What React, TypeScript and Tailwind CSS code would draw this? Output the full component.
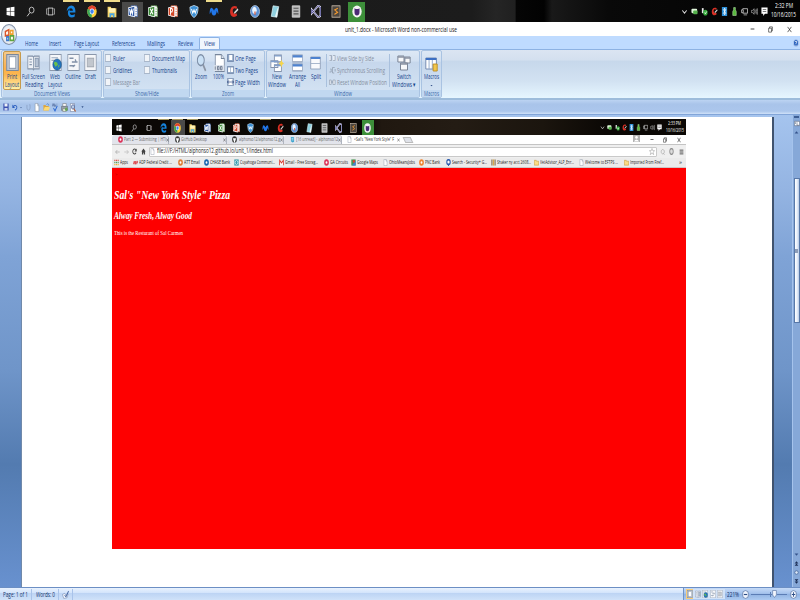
import React, { useLayoutEffect, useRef } from "react";

const SANS = "font-['Open_Sans','Liberation_Sans',sans-serif]";
const SERIF = "font-['Liberation_Serif',serif]";

/* One line of text condensed or stretched to the width of its box. */
function Fit({ children, className = "" }: { children: string; className?: string }) {
  const box = useRef<HTMLSpanElement>(null);
  const inner = useRef<HTMLSpanElement>(null);
  useLayoutEffect(() => {
    const apply = () => {
      if (box.current && inner.current && inner.current.offsetWidth) {
        inner.current.style.transform = "none";
        const w = inner.current.getBoundingClientRect().width;
        inner.current.style.transform = `scaleX(${box.current.clientWidth / w})`;
      }
    };
    apply();
    document.fonts?.ready.then(apply);
  }, []);
  return (
    <span ref={box} className={`block shrink-0 whitespace-nowrap ${className}`}>
      <span ref={inner} className="inline-block origin-left">{children}</span>
    </span>
  );
}

const doc = (
  <>
    <path d="M3 1h7l3 4v10H3z" fill="#fff" stroke="#7b8798" />
    <path d="M10 1v4h3" fill="none" stroke="#7b8798" />
  </>
);

const office = (color: string, dark: string, mark: React.ReactNode) => (
  <>
    <path d="M5 1h9l1.500 3v10H5z" fill="#f7f7f7" stroke={color} />
    <path d="M12 5h2M12 8h2M12 11h2" stroke={color} />
    <path d="M0 3l11-2v14L0 13z" fill="#f4f6fb" />
    <path d="M1 4l9-1.700v11.400L1 12z" fill={dark} />
    <g stroke="#fff" strokeWidth="1.600" fill="none">{mark}</g>
  </>
);

const ring = (c: string) => (
  <>
    <circle cx="8" cy="8" r="7.5" fill={c} />
    <circle cx="8" cy="8" r="2.8" fill="#fff" />
  </>
);

const pageIcon = (inside: React.ReactNode) => (
  <>
    <path d="M1 .5h14v15H1z" fill="#f6f7f9" stroke="#8a97ab" />
    {inside}
  </>
);

const ICONS: Record<string, React.ReactNode> = {
  windows: <path d="M1 3l6-1v5.600H1zM8 1.900L15 1v6.600H8zM1 8.500h6V14l-6-1zM8 8.500h7V15l-7-1z" fill="#fff" />,
  search: <><circle cx="10" cy="6" r="4.300" fill="none" stroke="#ddd" strokeWidth="1.300" /><path d="M7 9.500L2 15" stroke="#ddd" strokeWidth="1.400" /></>,
  taskview: <><rect x="4" y="3" width="8" height="10" fill="none" stroke="#ddd" strokeWidth="1.200" /><path d="M3 4H1v8h2M13 4h2v8h-2" fill="none" stroke="#ddd" /></>,
  edge: <path d="M1 8C1.500 3 4.500.5 8.500.5c4.500 0 6.500 3.500 6.500 6.500v2.200H6c.2 3.500 5 4 8 2v3c-4 2.500-11 1.600-11-4.400C3 7.500 4.500 6 6.500 5 5.800 5.700 5.700 6.300 5.600 7H11c0-4-5.500-4.400-10 1z" fill="#1683dc" />,
  chrome: <><circle cx="8" cy="8" r="7.500" fill="#fcd03c" /><path d="M8 8L1.400 4.500A7.500 7.500 0 0114.600 4.500z" fill="#e0432f" /><path d="M8 8L1.400 4.500A7.500 7.500 0 007.500 15.500z" fill="#3aa757" /><circle cx="8" cy="8" r="3.600" fill="#fff" /><circle cx="8" cy="8" r="2.700" fill="#3f83ee" /></>,
  folder: <><path d="M1 2h5l1 2h8v11H1z" fill="#f6d56b" /><path d="M3 4h10v5H3z" fill="#fff3b8" /><path d="M4 15v-5h8v5h-2.500v-2.500h-3V15z" fill="#4ba6e0" /></>,
  word: office("#2f57a2", "#2b56a3", <path d="M2.500 5l1.500 6 1.500-5L7 11l1.500-6.500" />),
  excel: office("#4b8b3b", "#3b8a35", <path d="M3.500 4.500l4.500 7M8 4.500l-4.500 7" />),
  ppt: office("#d9532c", "#d24625", <path d="M4 12V4.500h2.500q2 2 0 4H4" />),
  shield: <><path d="M8 .5l6.500 2C14.500 9 13 13 8 15.500 3 13 1.500 9 1.500 2.500z" fill="#3b8fd4" stroke="#d7ecfb" /><path d="M4 5l2 5 2-4 2 4 2-5" stroke="#fff" strokeWidth="1.500" fill="none" /></>,
  malware: <path d="M1 11C1 3 4 1 8 7c4-6 7-4 7 4-1-1-2-2-2.500-4C12 10 11 13 8 13S4 10 3.500 7C3 9 2 10 1 11z" fill="#2277ea" />,
  ccleaner: <><path d="M13 2C5-1 1 5 2 10s7 6 11 3l-1-3c-3 2-6 0-6-3s3-4 6-2z" fill="#d93025" /><path d="M8 9l6-5 1 2-6 5z" fill="#d5d5d5" /></>,
  globe: <><circle cx="8" cy="8" r="7.300" fill="#5d92d4" stroke="#c4d4e8" /><path d="M8 2a5 5 0 010 9 4 4 0 010-9z" fill="#e9f3ff" /><path d="M7 8h2v4H7z" fill="#d65a42" /></>,
  notepad: <><path d="M5 1l9 1-3 13-9-1z" fill="#8fd0df" stroke="#def4f8" /><path d="M12 4l1 0-2 11-3-1z" fill="#eaf7f8" /></>,
  calc: <><path d="M2 1h12v14H2z" fill="#b9b9b9" stroke="#e4e4e4" /><path d="M4 4h8M4 7.500h8M4 11h8" stroke="#555" strokeWidth="1.500" /></>,
  vs: <><path d="M11.500 1L15 2.500v11L11.500 15 1 5.500v5L11.500 1z" fill="none" stroke="#eceaf8" strokeWidth="2.600" /><path d="M11.500 1L15 2.500v11L11.500 15 1 5.500v5L11.500 1z" fill="none" stroke="#3b3a86" strokeWidth="1.100" /></>,
  sublime: <><rect x="1.500" y="1" width="13" height="14" fill="#4e4740" stroke="#d6c7b4" /><path d="M11 4L6 6l4.500 3L5.500 11.500" stroke="#f29a30" strokeWidth="1.500" fill="none" /></>,
  github: <><ellipse cx="8" cy="8" rx="7.500" ry="7.500" fill="#f4f4f4" /><path d="M4 4l2 1h4l2-1v5c0 3-2 4-4 4s-4-1-4-4z" fill="#4b2a75" /></>,
  chevron: <path d="M3 6l5 5 5-5" fill="none" stroke="#ddd" strokeWidth="1.800" />,
  chat: <><rect x="1" y="3" width="13" height="8" rx="2" fill="#dff5d9" /><rect x="5" y="6" width="10" height="7" rx="2" fill="#54b04b" /></>,
  usb: <><path d="M2 2h4v9H2z" fill="#e8e8e8" /><circle cx="10" cy="10" r="5" fill="#36ad3c" /><path d="M8 10l2 2 3-4" stroke="#fff" strokeWidth="1.500" fill="none" /></>,
  blue: <><rect x="2" y="0" width="12" height="16" fill="#2d8fd8" /><path d="M5 4l6 7-3 3V2l3 3-6 7" stroke="#fff" fill="none" strokeWidth="1.400" /></>,
  bottle: <path d="M6 1h4v4l2 3v7H4V8l2-3z" fill="#57b83c" stroke="#c5edb9" />,
  network: <><path d="M4 3h11v8H4z" fill="none" stroke="#ddd" strokeWidth="1.500" /><path d="M1 5h4v5H1zM6 14h8" stroke="#ddd" fill="#111" strokeWidth="1.300" /></>,
  volume: <><path d="M1 6h3l3-3v10l-3-3H1z" fill="none" stroke="#ddd" /><path d="M9 5q2 3 0 6M11.500 3.500q3 4.500 0 9M14 2q3 6 0 12" fill="none" stroke="#ddd" /></>,
  notify: <><path d="M1 1h14v11H9l-4 4v-4H1z" fill="#fff" /><path d="M4 4.500h8M4 8h8" stroke="#222" strokeWidth="1.200" /></>,
  print: pageIcon(<><rect x="1" y=".5" width="14" height="15" fill="#c3cad4" stroke="#7b8798" /><rect x="4" y="2.500" width="8" height="11" fill="#fff" stroke="#8c99ac" /></>),
  reading: <><path d="M1 2h6l1 1 1-1h6v12H9l-1 1-1-1H1z" fill="#eef1f6" stroke="#8291a8" /><path d="M8 3v12M10 4h4v8h-4zM3 5h3M3 7.500h3M3 10h3" fill="#b5c2d4" stroke="#8595ab" /></>,
  web: pageIcon(<><path d="M3 3.500h8M3 6h5" stroke="#9aa9bd" /><circle cx="10" cy="10" r="5.300" fill="#2676bd" stroke="#174b81" strokeWidth=".6" /><path d="M7 7l3 1 1 2-3 2-2-3zM11 11l2-1-1 3z" fill="#6bc04b" /></>),
  outline: pageIcon(<path d="M3 4h5M6 7.500h7M3 11h5M7 12l3-1.500M10 5l1 2" stroke="#8291a8" strokeWidth="1.500" />),
  draft: pageIcon(<rect x="4" y="4" width="8" height="8" fill="#c2c7ce" stroke="#a2a8b1" />),
  zoom: <><path d="M10 9l4 6" stroke="#8b94a3" strokeWidth="2.400" /><ellipse cx="7" cy="5.500" rx="5" ry="4.800" fill="#c9e0f5" stroke="#7d8ea6" strokeWidth="1.400" /></>,
  hundred: <><path d="M3 .5h8L15 4v11.500H3z" fill="#fff" stroke="#77869c" /><path d="M11 .5V4h4" fill="#dfe5ee" stroke="#77869c" /><path d="M1 10h14v5H1z" fill="#dde3ec" /><path d="M3 11v3M6 11h2v3H6zM10 11h2v3h-2z" stroke="#59677d" fill="none" strokeWidth=".8" /></>,
  onepage: <><path d="M1 1h14v14H1z" fill="#90a6c4" stroke="#415b87" /><path d="M5 2h7v10H5z" fill="#fff" /></>,
  twopages: <><path d="M1 1h14v14H1z" fill="#8fa5c3" stroke="#4c638b" /><path d="M2.500 3h5v9h-5zM9 3h5v9H9z" fill="#fff" /></>,
  pagewidth: <><path d="M1 1h14v14H1z" fill="#b6c4d7" stroke="#526a92" /><path d="M4 2h8v12H4z" fill="#fff" /><path d="M1 8h14M4 5L1 8l3 3M12 5l3 3-3 3" stroke="#24427d" fill="none" strokeWidth="1.400" /></>,
  newwin: <><path d="M5 1h8v6H5zM1 6h8v6H1zM5 9.500h8v6H5z" fill="#fff" stroke="#8492ab" /><path d="M5 1.700h8M1 6.700h8M5 10.200h8" stroke="#7f9fcd" strokeWidth="1.200" /><path d="M13 5l1 2 2 1.500-2 1L13 12l-1-2.500-2-1 2-1.500z" fill="#f7d64a" /></>,
  arrange: <><path d="M1 1h14v6H1zM1 9h14v6H1z" fill="#fff" stroke="#8b9bb5" /><path d="M1 2h14M1 10h14" stroke="#4d82cf" strokeWidth="2" /></>,
  split: <><path d="M1 2h14v12H1z" fill="#f9fafc" stroke="#8b9bb5" /><path d="M1 3h14" stroke="#4d82cf" strokeWidth="2" /><path d="M1 8.500h14" stroke="#9aabc4" /></>,
  side: <path d="M1 3h5v10H1M9 3h5v10H9M5 3v10" fill="#e9eef5" stroke="#8c98aa" strokeWidth="1.300" />,
  sync: <path d="M1 12h4V6M8 3h5M8 3v11h4M14 6v5M4 5v2" fill="none" stroke="#8c98aa" strokeWidth="1.500" />,
  reset: <path d="M1 4h4v9H1zM9 4h5v9H9zM5 8h4M7 6v4" fill="#e9eef5" stroke="#8c98aa" strokeWidth="1.300" />,
  switch: <><path d="M1 1h7v6H1zM9 2h6v6H9zM4 8h8v7H4z" fill="#f7f8fa" stroke="#737e90" /><path d="M1 2h7M9 3h6M4 9h8" stroke="#8a93a3" strokeWidth="1.600" /></>,
  macros: <><path d="M1 2h13v11H1z" fill="#fff" stroke="#6c83ab" /><path d="M1 3h13" stroke="#3c6fc3" strokeWidth="2" /><path d="M5 4v9M9 4v9" stroke="#8ca4ca" /><path d="M10 8h5v7h-5z" fill="#f1c64c" stroke="#b98b23" /></>,
  save: <><path d="M1 1h14v14H1z" fill="#3a4fae" /><path d="M4 1h8v6H4z" fill="#eef2fb" /><path d="M4 10h8v5H4z" fill="#c9d2ee" /></>,
  undo: <><path d="M3 6c5-5 11-2 10 3-.500 3-3 4-5 5" fill="none" stroke="#2c5fc0" strokeWidth="2.300" /><path d="M1 1v8h7z" fill="#2c5fc0" /></>,
  redo: <path d="M3 2v7q0 5 5 5t5-5V3M10 2h4" fill="none" stroke="#8ba2c6" strokeWidth="2.200" />,
  doc,
  open: <><path d="M1 4h5l1 2h6v9H1z" fill="#dda73e" /><path d="M4 8h12l-3 7H1z" fill="#fbd976" /><path d="M8 3c3-3 5-1 5 2" stroke="#4c7fc5" fill="none" strokeWidth="1.500" /></>,
  spell: <><path d="M1 6l2-5 2 5M7 1v5h2V3M12 2h2M12 5h2" stroke="#415b91" fill="none" strokeWidth="1.200" /><path d="M4 9l4 5 6-9" stroke="#2866d2" fill="none" strokeWidth="2.200" /></>,
  printer: <><path d="M4 1h8v5H4z" fill="#fff" stroke="#666" /><path d="M1 6h14v7H1z" fill="#9aa1a9" stroke="#5b616b" /><path d="M4 10h8v5H4z" fill="#e8f2dc" stroke="#666" /><circle cx="12" cy="11" r="3" fill="#67a457" /></>,
  preview: <><path d="M1 1h11v14H1z" fill="#fff" stroke="#5c6687" /><circle cx="8" cy="7" r="4" fill="#bfd5ef" stroke="#40538c" strokeWidth="1.500" /><path d="M10 10l5 5" stroke="#b65b2e" strokeWidth="2.500" /></>,
  proof: <><path d="M1 8l5-2 2 2 6-1-3 7-7 1z" fill="#f5f8fd" stroke="#6479a3" /><path d="M6 9l3 3 6-10" stroke="#3d5f9d" strokeWidth="1.800" fill="none" /></>,
  opera: ring("#dc3358"),
  octocat: <><circle cx="8" cy="8" r="7.500" fill="#333" /><path d="M4 4l2 1h4l2-1v6H4zM6 10h4v5H6z" fill="#fff" /></>,
  mail: <><path d="M3 2l10 1v10l-5 2-5-3z" fill="#3fa5ce" /><path d="M5 6h6M5 9h6" stroke="#fff" strokeWidth="1.500" /></>,
  apps: <><path d="M1 3h14" stroke="#dd4b39" strokeWidth="3" strokeDasharray="3.500 2" /><path d="M1 8h14" stroke="#4b9c58" strokeWidth="3" strokeDasharray="3.500 2" /><path d="M1 13h14" stroke="#edb32e" strokeWidth="3" strokeDasharray="3.500 2" /></>,
  adp: <path d="M1 12l3-7 2 7M7.500 5v7q3-3 0-7M12 12V5h2.500v3.500H12" stroke="#d8343b" strokeWidth="2" fill="none" />,
  att: ring("#de7d35"),
  chase: ring("#1765ae"),
  tri: <><rect x="1" y="1" width="14" height="14" fill="#3998ab" /><circle cx="8" cy="8" r="4.500" fill="none" stroke="#dff6fa" strokeWidth="2" /></>,
  gmail: <path d="M2 14V3l6 6 6-6v11" fill="#fff" stroke="#d93c31" strokeWidth="2.600" />,
  maps: <><rect x="1" y="1" width="14" height="14" fill="#3f9b56" /><path d="M3 15L15 4v11z" fill="#447ed8" /><circle cx="9" cy="5" r="3.500" fill="#dc4436" /></>,
  pnc: ring("#ef8430"),
  secure: <><circle cx="8" cy="7" r="5.500" fill="#fff" stroke="#2f5dad" strokeWidth="3.500" /><path d="M8 11v5" stroke="#2f5dad" strokeWidth="3" /></>,
  books: <><path d="M3 1v14M13 1v14" stroke="#6b5130" strokeWidth="3" /><path d="M8 1v14" stroke="#d9a94e" strokeWidth="4" /></>,
  fold: <path d="M1 3h6l1 2h7v9H1z" fill="#fbdc84" stroke="#c7953b" strokeWidth="1.500" />,
  back: <path d="M15 8H2M7 3L2 8l5 5" fill="none" stroke="#aaa" strokeWidth="2.200" />,
  forward: <path d="M1 8h13M9 3l5 5-5 5" fill="none" stroke="#bbb" strokeWidth="2.200" />,
  reload: <><path d="M13 11a5.700 5.700 0 110-6" fill="none" stroke="#444" strokeWidth="2.600" /><path d="M15 1v7H8z" fill="#444" /></>,
  home: <path d="M1 8l7-7 7 7h-2v7H9v-4H7v4H3V8z" fill="#444" />,
  star: <path d="M8 1l2 5h5l-4 3.500 1.500 5.500L8 12l-4.500 3L5 9.500 1 6h5z" fill="none" stroke="#888" strokeWidth="1.100" />,
  bell: <path d="M11 13a5 5 0 110-9 5 5 0 010 9l4 2" fill="none" stroke="#999" strokeWidth="1.500" />,
  block: <ellipse cx="8" cy="8" rx="5.500" ry="6.500" fill="#ddd" stroke="#888" strokeWidth="2.500" />,
  menu: <path d="M2 3h12M2 8h12M2 13h12" stroke="#444" strokeWidth="2.600" />,
  person: <><rect width="16" height="16" fill="#b2b2b2" /><circle cx="8" cy="5.500" r="3" fill="#fff" /><path d="M2 15q6-10 12 0z" fill="#fff" /></>,
  min: <path d="M2 8h12" stroke="#222" strokeWidth="2.400" />,
  restore: <path d="M2 5h9v9H2zM5 5V2h9v9h-3" fill="none" stroke="#222" strokeWidth="1.600" />,
  close: <path d="M2 2l12 12M14 2L2 14" stroke="#222" strokeWidth="1.800" />,
  help: <><circle cx="8" cy="8" r="7" fill="#2f66c0" stroke="#cfe0f8" strokeWidth="1.500" /><path d="M5.500 6q2.500-4 5 0L8 9v1.500M8 12v1.500" stroke="#fff" fill="none" strokeWidth="1.600" /></>,
  check: <rect x="1" y="1" width="14" height="14" fill="#f1f4f8" stroke="#a9b7ca" strokeWidth="2" />,
  minus: <><circle cx="8" cy="8" r="7" fill="#eef4fd" stroke="#5b76a6" strokeWidth="1.500" /><path d="M4 8h8" stroke="#2d4d86" strokeWidth="2" /></>,
  plus: <><circle cx="8" cy="8" r="7" fill="#eef4fd" stroke="#5b76a6" strokeWidth="1.500" /><path d="M4 8h8M8 4v8" stroke="#2d4d86" strokeWidth="2" /></>,
  thumb: <path d="M2 1h12v9l-6 5-6-5z" fill="#f3f7fd" stroke="#5b76a6" strokeWidth="1.600" />,
  up: <path d="M2 11l6-7 6 7z" fill="#34528a" />,
  down: <path d="M2 5l6 7 6-7z" fill="#34528a" />,
  dblup: <path d="M2 8l6-7 6 7zM2 15l6-7 6 7z" fill="#1c2f57" />,
  dbldown: <path d="M2 1l6 7 6-7zM2 8l6 7 6-7z" fill="#1c2f57" />,
  ball: <circle cx="8" cy="8" r="5.500" fill="#dce8f8" stroke="#34528a" strokeWidth="2" />,
  ruler: <><path d="M1 3h14v10H1z" fill="#fff" stroke="#5b6880" strokeWidth="1.500" /><path d="M4 5v4M8 5v7h5" stroke="#5b6880" strokeWidth="1.500" fill="none" /></>,
  office: (
    <g fill="#fff8ee" strokeWidth="2">
      <path d="M2 4l5-2v6l-5 1z" stroke="#d9552b" />
      <path d="M9 3h4v4H9z" stroke="#f0a02c" />
      <path d="M4 10h3v4H4z" stroke="#3f78c9" />
      <path d="M9 9h5v5H9z" stroke="#5ea53f" />
    </g>
  ),
};

function Icon({ name, className = "" }: { name: string; className?: string }) {
  return (
    <svg viewBox="0 0 16 16" preserveAspectRatio="none" className={`block shrink-0 ${className}`}>
      {ICONS[name]}
    </svg>
  );
}

const APPS = ["windows", "search", "taskview", "edge", "chrome", "folder", "word", "excel", "ppt", "shield", "malware", "ccleaner", "globe", "notepad", "calc", "vs", "sublime", "github"];
const TRAY = ["chevron", "chat", "usb", "ccleaner", "blue", "bottle", "network", "volume", "notify"];
const RUNNING = ["edge", "chrome", "folder", "malware"];
const SYSTEM = ["windows", "search", "taskview"];

function Taskbar({ small = false, active, time }: { small?: boolean; active: string; time: string }) {
  const appSize = (a: string) =>
    SYSTEM.includes(a)
      ? small ? "h-[8px] w-[6px]" : "h-[11px] w-[9px]"
      : small ? "h-[10px] w-[7px]" : "h-[13px] w-[10px]";
  return (
    <div className={`flex shrink-0 items-stretch ${SANS} leading-none text-white ${small ? "h-[16px] bg-[linear-gradient(90deg,#0b0805_0,#0b0805_44%,#201810_47%,#241c14_60%,#1b150e_75%,#0b0805_86%)] text-[4.9px]" : "h-[22px] bg-[linear-gradient(90deg,#191919_0,#1c1c1c_59%,#252525_62%,#202020_64.4%,#050505_64.5%,#020202_68%,#191919_69%,#090909_76%,#030303)] text-[6.9px]"}`}>
      {APPS.map((a) => (
        <div key={a} className={`flex shrink-0 flex-col items-center ${small ? "w-[14.64px]" : "w-[20.4px]"}`}>
          <div className={`${small ? "h-px w-[11px]" : "h-[1.5px] w-[16px]"} ${RUNNING.includes(a) ? (small ? "bg-[#a79a63]" : "bg-[#efdc8c]") : ""}`} />
          <div className={`flex grow items-center justify-center ${a === "github" ? (small ? "w-[12px] bg-[#3d8f3a]" : "w-[17px] bg-[#3d8f3a]") : a === active ? "w-full bg-[#4a4a4a]" : "w-full"}`}>
            <Icon name={a} className={appSize(a)} />
          </div>
        </div>
      ))}
      <div className="grow" />
      <div className="mr-[2px] flex items-center">
        {TRAY.map((t) => (
          <div key={t} className={`flex shrink-0 justify-center ${small ? "w-[7.15px]" : "w-[10px]"}`}>
            <Icon name={t} className={small ? "h-[7px] w-[5px]" : "h-[9px] w-[7px]"} />
          </div>
        ))}
      </div>
      <div className={`flex flex-col items-center justify-center ${small ? "mr-[2.5px] gap-[1.5px]" : "mr-[4px] gap-[2.5px]"}`}>
        <Fit className={small ? "w-[13px]" : "w-[18px]"}>{time}</Fit>
        <Fit className={small ? "w-[18px]" : "w-[25px]"}>10/16/2015</Fit>
      </div>
    </div>
  );
}

function Big({ icon, iconClass = "h-[17px] w-[13px]", className, lines, widths, active = false }: { icon: string; iconClass?: string; className: string; lines: string[]; widths: string[]; active?: boolean }) {
  return (
    <div className={`flex h-[39px] shrink-0 flex-col items-center ${className} ${active ? "rounded-[2px] border border-[#c69a4c] bg-[linear-gradient(#f5c98a,#fbb04c_45%,#fcb64f_60%,#fff0a8)]" : "border border-transparent"}`}>
      <div className="flex h-[21px] items-center">
        <Icon name={icon} className={iconClass} />
      </div>
      {lines.map((l, i) =>
        l === "▾" ? (
          <Icon key={l} name="down" className={`mt-[3px] h-[3px] ${widths[i]}`} />
        ) : (
          <Fit key={l} className={`h-[7.6px] ${widths[i]}`}>{l}</Fit>
        )
      )}
    </div>
  );
}

function Small({ icon, iconClass = "w-[7px] h-[8px] mr-[1px]", width, children, dim = false }: { icon: string; iconClass?: string; width: string; children: string; dim?: boolean }) {
  return (
    <div className={`flex h-[12px] items-center ${dim ? "text-[#858e9e]" : ""}`}>
      <Icon name={icon} className={iconClass} />
      <Fit className={width}>{children}</Fit>
    </div>
  );
}

function Group({ title, titleWidth, className, children }: { title: string; titleWidth: string; className: string; children: React.ReactNode }) {
  return (
    <div className={`flex h-[48px] shrink-0 flex-col overflow-hidden rounded-[2px] border border-[#a9c3e2] bg-[linear-gradient(#dde8f5,#d2e0f1_22%,#c6d7ec_24%,#d5e4f4)] ${className}`}>
      <div className="flex h-[39px] items-start">{children}</div>
      <div className="flex h-[8px] items-center justify-center bg-[#c1d8f0] text-[#3e6aaa]">
        <Fit className={titleWidth}>{title}</Fit>
      </div>
    </div>
  );
}

const CHECK = "h-[8px] w-[6px] mr-[2px]";

function Ribbon() {
  return (
    <div className="flex h-[49px] shrink-0 gap-[2px] border-t border-[#8db2e3] bg-[linear-gradient(#dbe5f2,#d4e0ef_20%,#c7d8eb_24%,#d2e2f2_65%,#e6f6ff)] pl-px leading-none text-[#15428b]">
      <Group title="Document Views" titleWidth="w-[36px]" className="w-[101px] pl-px">
        <Big icon="print" className="w-[18px]" lines={["Print", "Layout"]} widths={["w-[10px]", "w-[14px]"]} active />
        <Big icon="reading" iconClass="h-[17px] w-[13px]" className="w-[25px]" lines={["Full Screen", "Reading"]} widths={["w-[23px]", "w-[18px]"]} />
        <Big icon="web" className="w-[18px]" lines={["Web", "Layout"]} widths={["w-[10px]", "w-[14px]"]} />
        <Big icon="outline" className="w-[18px]" lines={["Outline"]} widths={["w-[16px]"]} />
        <Big icon="draft" className="w-[17px]" lines={["Draft"]} widths={["w-[11px]"]} />
      </Group>
      <Group title="Show/Hide" titleWidth="w-[24px]" className="-ml-px w-[87px]">
        <div className="mt-px ml-px w-[39px]">
          <Small icon="check" iconClass={CHECK} width="w-[12px]">Ruler</Small>
          <Small icon="check" iconClass={CHECK} width="w-[19px]">Gridlines</Small>
          <Small icon="check" iconClass={CHECK} width="w-[27px]" dim>Message Bar</Small>
        </div>
        <div className="mt-px">
          <Small icon="check" iconClass={CHECK} width="w-[33px]">Document Map</Small>
          <Small icon="check" iconClass={CHECK} width="w-[25px]">Thumbnails</Small>
        </div>
      </Group>
      <Group title="Zoom" titleWidth="w-[12px]" className="-ml-px w-[74px]">
        <Big icon="zoom" iconClass="h-[18px] w-[11px]" className="w-[18px]" lines={["Zoom"]} widths={["w-[12px]"]} />
        <Big icon="hundred" iconClass="h-[18px] w-[12px]" className="w-[17px]" lines={["100%"]} widths={["w-[11px]"]} />
        <div className="mt-px">
          <Small icon="onepage" width="w-[21px]">One Page</Small>
          <Small icon="twopages" width="w-[23px]">Two Pages</Small>
          <Small icon="pagewidth" width="w-[25px]">Page Width</Small>
        </div>
      </Group>
      <Group title="Window" titleWidth="w-[18px]" className="-ml-px w-[154px]">
        <Big icon="newwin" iconClass="h-[18px] w-[14px]" className="-ml-px w-[21px]" lines={["New", "Window"]} widths={["w-[10px]", "w-[18px]"]} />
        <Big icon="arrange" iconClass="h-[18px] w-[11px]" className="w-[20px]" lines={["Arrange", "All"]} widths={["w-[17px]", "w-[5px]"]} />
        <Big icon="split" iconClass="h-[16px] w-[11px]" className="w-[17px]" lines={["Split"]} widths={["w-[10px]"]} />
        <div className="mt-[3px] mr-[2px] ml-[2px] h-[33px] w-px bg-[#a9c0dd]" />
        <div className="mt-px w-[60px]">
          <Small icon="side" width="w-[37px]" dim>View Side by Side</Small>
          <Small icon="sync" width="w-[48px]" dim>Synchronous Scrolling</Small>
          <Small icon="reset" width="w-[50px]" dim>Reset Window Position</Small>
        </div>
        <div className="mt-[3px] h-[33px] w-px bg-[#a9c0dd]" />
        <Big icon="switch" iconClass="h-[16px] w-[14px]" className="w-[28px]" lines={["Switch", "Windows ▾"]} widths={["w-[14px]", "w-[24px]"]} />
      </Group>
      <Group title="Macros" titleWidth="w-[15px]" className="-ml-px w-[21px]">
        <Big icon="macros" iconClass="h-[16px] w-[13px] mt-[2px]" className="w-[19px]" lines={["Macros", "▾"]} widths={["w-[15px]", "w-[3px]"]} />
      </Group>
    </div>
  );
}

const TABS = [
  { icon: "opera", text: "Part 2 — Submitting | HTI", width: "w-[42px]" },
  { icon: "octocat", text: "GitHub Desktop", width: "w-[26px]" },
  { icon: "octocat", text: "alphonso12/alphonso12.g", width: "w-[41px]" },
  { icon: "mail", text: "[16 unread] - alphonso12", width: "w-[42px]" },
];

const BOOKMARKS = [
  { icon: "apps", text: "Apps", width: "w-[8px]", box: "w-[18.5px]" },
  { icon: "adp", text: "ADP Federal Credit ...", width: "w-[33px]", box: "w-[45px]" },
  { icon: "att", text: "ATT  Email", width: "w-[16px]", box: "w-[26px]" },
  { icon: "chase", text: "CHASE Bank", width: "w-[20px]", box: "w-[30.5px]" },
  { icon: "tri", text: "Cuyahoga Communi...", width: "w-[35px]", box: "w-[45px]" },
  { icon: "gmail", text: "Gmail - Free Storag...", width: "w-[33px]", box: "w-[44.5px]" },
  { icon: "opera", text: "GA Circuits", width: "w-[18px]", box: "w-[27.5px]" },
  { icon: "maps", text: "Google Maps", width: "w-[21px]", box: "w-[32px]" },
  { icon: "doc", text: "OhioMeansJobs", width: "w-[26px]", box: "w-[36px]" },
  { icon: "pnc", text: "PNC Bank", width: "w-[15px]", box: "w-[26.500px]" },
  { icon: "secure", text: "Search - Security+ G...", width: "w-[35px]", box: "w-[45px]" },
  { icon: "books", text: "Shaker ny acct 2608...", width: "w-[34px]", box: "w-[43.500px]" },
  { icon: "fold", text: "VetAdvisor_ALP_Enr...", width: "w-[34px]", box: "w-[45px]" },
  { icon: "doc", text: "Welcome to EFTPS ...", width: "w-[33px]", box: "w-[45px]" },
  { icon: "fold", text: "Imported From Firef...", width: "w-[34px]", box: "w-[55px]" },
];

function BrowserShot() {
  return (
    <div className="ml-[90px] mt-[2px] flex h-[430px] w-[574px] flex-col overflow-hidden">
      <Taskbar small active="chrome" time="2:33 PM" />
      <div className="flex h-[10px] shrink-0 items-center border-b border-[#c4c4c4] bg-white text-[5px] leading-none text-[#666]">
        {TABS.map((t) => (
          <div key={t.text} className="flex h-full w-[57.4px] shrink-0 items-center rounded-t-[3px] border-r border-[#aeb4bf] bg-[#e2e4eb] pl-[5.500px]">
            <Icon name={t.icon} className="mr-[1.500px] h-[7px] w-[5px]" />
            <Fit className={t.width}>{t.text}</Fit>
            <div className="grow" />
            <Icon name="close" className="h-[4px] w-[3px]" />
          </div>
        ))}
        <div className="flex h-full w-[61px] items-center pl-[5.500px] text-[#333]">
          <Icon name="doc" className="mr-[2px] h-[7px] w-[5px]" />
          <Fit className="w-[40px]">{'<Sal\'s "New York Style" F'}</Fit>
          <Icon name="close" className="ml-[3px] h-[4px] w-[3px]" />
        </div>
        <div className="ml-px h-[6px] w-[8px] skew-x-[25deg] border border-[#bbb] bg-[#dfe2e9]" />
        <div className="grow" />
        <Icon name="person" className="mr-[10px] h-[7px] w-[7px] self-start" />
        <Icon name="min" className="mr-[9px] h-[5px] w-[4px]" />
        <Icon name="restore" className="mr-[10px] h-[6px] w-[4px]" />
        <Icon name="close" className="mr-[5px] h-[6px] w-[4px]" />
      </div>
      <div className="flex h-[13px] shrink-0 items-center bg-[#efefef] pl-[3px] text-[6.300px] leading-none text-[#222]">
        <Icon name="back" className="mr-[3.500px] h-[6px] w-[5px]" />
        <Icon name="forward" className="mr-[3.500px] h-[6px] w-[5px]" />
        <Icon name="reload" className="mr-[4px] h-[7px] w-[5px]" />
        <Icon name="home" className="mr-[3px] h-[7px] w-[5px]" />
        <div className="flex h-[10px] w-[508px] items-center rounded-[1px] border border-[#c9c9c9] bg-white">
          <Icon name="doc" className="mr-[1.500px] h-[7px] w-[5px]" />
          <Fit className="w-[116px]">file:///F:/HTML/alphonso12.github.io/unit_1/index.html</Fit>
          <div className="grow" />
          <Icon name="star" className="mr-[1px] h-[7px] w-[6px]" />
        </div>
        <Icon name="bell" className="ml-[2.500px] h-[7px] w-[5px]" />
        <Icon name="block" className="ml-[4px] h-[7px] w-[5px]" />
        <Icon name="menu" className="ml-[5px] h-[6px] w-[5px]" />
      </div>
      <div className="flex h-[10px] shrink-0 items-center border-b border-[#d0c4c4] bg-[#ebebeb] pl-[2px] text-[5px] leading-none text-[#222]">
        {BOOKMARKS.map((b) => (
          <div key={b.text} className={`flex shrink-0 items-center ${b.box}`}>
            <Icon name={b.icon} className="mr-px h-[7px] w-[5px]" />
            <Fit className={b.width}>{b.text}</Fit>
          </div>
        ))}
        <Fit className="w-[3px]">»</Fit>
      </div>
      <div className={`grow bg-[#fe0000] pl-[2px] text-white ${SERIF} leading-none`}>
        <div className="mt-[5px] ml-[1px] h-[15px] text-[4px] text-[#8b0000]">&gt;</div>
        <h1 className="h-[14px] text-[13.500px] font-bold italic"><Fit className="w-[116px]">{'Sal\'s "New York Style" Pizza'}</Fit></h1>
        <h2 className="mt-[9px] h-[10px] text-[10px] font-bold italic"><Fit className="w-[78px]">Alway Fresh, Alway Good</Fit></h2>
        <p className="mt-[9px] text-[6.700px]"><Fit className="w-[69px]">This is the Resturant of Sal Carmen</Fit></p>
      </div>
    </div>
  );
}

const sep = "h-[11px] w-px shrink-0 bg-[#a9c3ea]";

export default function App() {
  return (
    <div className={`relative flex h-[600px] w-[800px] flex-col overflow-hidden bg-white text-[7px] ${SANS}`}>
      <Taskbar active="word" time="2:32 PM" />

      <div className="flex h-[14px] shrink-0 items-center pt-px pl-[345px] leading-none text-[#111]">
        <Fit className="w-[112px]">unit_1.docx - Microsoft Word non-commercial use</Fit>
        <div className="grow" />
        <Icon name="min" className="mr-[13px] mb-px h-[6px] w-[5px]" />
        <Icon name="restore" className="mr-[14px] mb-px h-[7px] w-[5px]" />
        <Icon name="close" className="mr-[8px] mb-px h-[7px] w-[5px]" />
      </div>

      <div className="flex h-[13px] shrink-0 items-center bg-[#bfdbff] leading-none text-[#15428b]">
        <Fit className="mt-px ml-[25px] w-[13px]">Home</Fit>
        <Fit className="mt-px ml-[11px] w-[12px]">Insert</Fit>
        <Fit className="mt-px ml-[13px] w-[25px]">Page Layout</Fit>
        <Fit className="mt-px ml-[13px] w-[23px]">References</Fit>
        <Fit className="mt-px ml-[12px] w-[18px]">Mailings</Fit>
        <Fit className="mt-px ml-[13px] w-[15px]">Review</Fit>
        <div className="ml-[6px] flex h-[12px] w-[21px] items-center justify-center self-end rounded-t-[2px] border border-b-0 border-[#8db2e3] bg-[#f0f6fd]">
          <Fit className="w-[11px]">View</Fit>
        </div>
        <div className="grow" />
        <Icon name="help" className="mr-[1px] h-[8px] w-[6px]" />
      </div>

      <Ribbon />

      <div className="h-[2px] shrink-0 bg-[#9dbcdb]" />
      <div className="flex h-[15px] shrink-0 items-center border-b border-[#82a5d8] bg-[linear-gradient(#bcd3f2,#a9c4ea_30%,#abc6ec_80%,#cfe1f8)] pl-[2.500px] text-[#15428b]">
        <Icon name="save" className="mr-[3px] h-[8px] w-[6px]" />
        <Icon name="undo" className="mr-[2px] h-[7px] w-[6px]" />
        <Icon name="down" className="mr-[4px] h-[3px] w-[2px]" />
        <Icon name="redo" className="mr-[3.500px] h-[7px] w-[5px]" />
        <Icon name="doc" className="mr-[2.500px] h-[9px] w-[6px]" />
        <Icon name="open" className="mr-[2px] h-[8px] w-[7px]" />
        <Icon name="spell" className="mr-[3px] h-[9px] w-[6px]" />
        <Icon name="printer" className="mr-[2.500px] h-[9px] w-[7px]" />
        <Icon name="preview" className="mr-[5px] h-[9px] w-[6px]" />
        <Icon name="down" className="h-[4px] w-[3px]" />
      </div>

      <div className="flex h-[472px] shrink-0 bg-[linear-gradient(#a5c4ee,#94b4e2_16%,#7fa3d6_30%,#6f95c9_54%,#537bb0_74%,#6891cf)]">
        <div className="mt-[2px] ml-[21px] h-[470px] w-[753px] shrink-0 border-r-2 border-l border-r-[#40536f] border-l-[#7089aa] bg-white">
          <BrowserShot />
        </div>
        <div className="grow" />
        <div className="flex w-[8px] shrink-0 flex-col items-center border-l border-[#a5c3ec] bg-[#86a8d8]">
          <div className="mt-px h-[2px] w-[5px] bg-[#3e5f95]" />
          <Icon name="ruler" className="mt-[2px] h-[7px] w-[6px]" />
          <Icon name="up" className="mt-[3px] h-[5px] w-[5px]" />
          <div className="mt-[43px] flex h-[145px] w-[6px] items-center justify-center border border-[#5878a8] bg-[linear-gradient(90deg,#fff,#e8f0fb_50%,#b9cbe6)]">
            <div className="h-[4px] w-[3px] bg-[#8d9db8]" />
          </div>
          <div className="grow" />
          <Icon name="down" className="mb-[4px] h-[5px] w-[5px]" />
          <Icon name="dblup" className="mb-[4px] h-[5px] w-[5px]" />
          <Icon name="ball" className="mb-[4px] h-[5px] w-[5px]" />
          <Icon name="dbldown" className="mb-[3px] h-[5px] w-[5px]" />
        </div>
      </div>

      <div className="flex h-[13px] shrink-0 items-center border-t border-[#6c8fc4] bg-[linear-gradient(#e9f2fe,#d3e4fb_40%,#bdd4f4_45%,#d0e2f9)] leading-none text-[#15346b]">
        <Fit className="ml-[3px] w-[25px]">Page: 1 of 1</Fit>
        <div className={`${sep} mr-[4px] ml-[3px]`} />
        <Fit className="w-[19px]">Words: 0</Fit>
        <div className={`${sep} mr-[3px] ml-[3px]`} />
        <Icon name="proof" className="h-[9px] w-[7px]" />
        <div className={`${sep} ml-[3px]`} />
        <div className="grow" />
        <div className="flex h-full w-[117px] items-center border-l border-[#6f93c8] bg-[linear-gradient(#c5daf7,#a5c3ed_45%,#8fb2e2_50%,#aecbf1)]">
          <div className="ml-[2px] flex h-[10px] items-center gap-[1.500px] bg-[#d2e2f7] pr-[2px]">
            <div className="flex h-[10px] w-[7px] items-center justify-center bg-[#f9cd79]"><Icon name="print" className="h-[8px] w-[6px]" /></div>
            <Icon name="reading" className="h-[8px] w-[6px]" />
            <Icon name="web" className="h-[8px] w-[6px]" />
            <Icon name="outline" className="h-[8px] w-[6px]" />
            <Icon name="draft" className="h-[8px] w-[6px]" />
          </div>
          <Fit className="ml-[2px] w-[12px]">221%</Fit>
          <Icon name="minus" className="ml-[3px] h-[9px] w-[7px]" />
          <div className="ml-[2px] flex items-center">
            <div className="h-px w-[19px] bg-[#5b7db5]" />
            <div className="h-[5px] w-px bg-[#5b7db5]" />
            <div className="h-px w-[1px] bg-[#5b7db5]" />
            <Icon name="thumb" className="h-[8px] w-[5px]" />
            <div className="h-px w-[10px] bg-[#5b7db5]" />
          </div>
          <Icon name="plus" className="ml-[3px] h-[9px] w-[7px]" />
        </div>
      </div>

      <div className="absolute top-[24px] left-[1px] flex h-[21px] w-[16px] items-center justify-center rounded-[50%] border border-[#8492a8] bg-[radial-gradient(#ffffff_30%,#dfe5ee_70%,#b3bfd0)]">
        <Icon name="office" className="h-[14px] w-[11px]" />
      </div>
    </div>
  );
}
